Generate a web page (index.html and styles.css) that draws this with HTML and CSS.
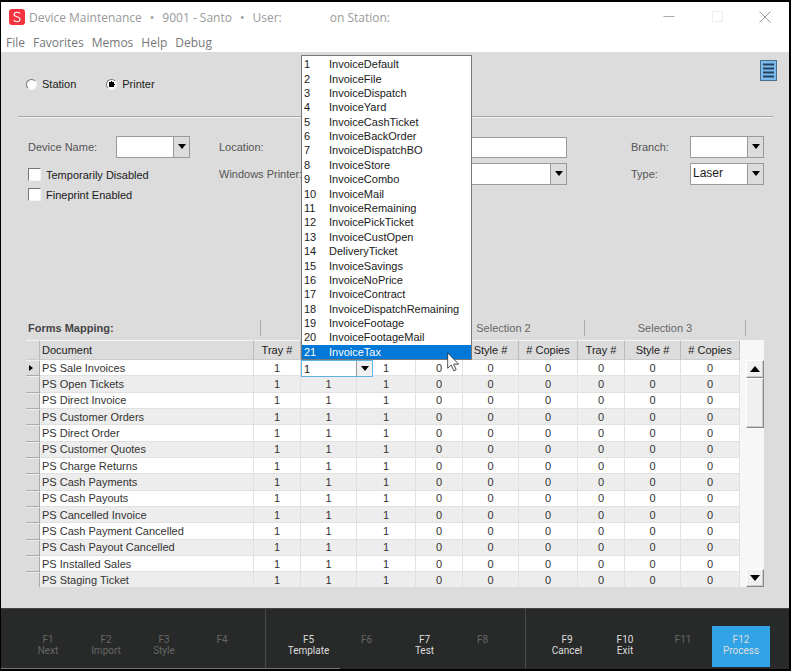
FILE: index.html
```
<!DOCTYPE html>
<html lang="en">
<head>
    <meta charset="UTF-8">
    <meta name="viewport" content="width=device-width, initial-scale=1.0">
    <title>Device Maintenance</title>
    <link rel="stylesheet" href="styles.css">
</head>
<body>
    <div class="window">
        <header class="title-bar">
            <svg class="app-logo" viewBox="0 0 16 16" aria-hidden="true">
                <rect width="16" height="16" rx="3" fill="#f5333f"/>
                <path d="M11 4.6C10.2 3.7 9.2 3.3 8 3.3C6.300 3.300 5.100 4.200 5.100 5.500C5.100 6.900 6.400 7.400 8 7.800C9.800 8.200 11 8.800 11 10.300C11 11.800 9.700 12.700 8 12.700C6.600 12.700 5.500 12.200 4.700 11.200" fill="none" stroke="#fff" stroke-width="1.1"/>
            </svg>
            <div class="title">
                <span>Device Maintenance</span>
                <span>•</span>
                <span>9001 - Santo</span>
                <span>•</span>
                <span class="user">User:</span>
                <span>on Station:</span>
            </div>
            <div class="window-buttons">
                <button type="button" aria-label="Minimize"><svg viewBox="0 0 12 12"><path d="M0.500 5.500H11.500" stroke="#aaa"/></svg></button>
                <button type="button" aria-label="Maximize" disabled><svg viewBox="0 0 12 12"><rect x="1.500" y="0.500" width="10" height="10" fill="none" stroke="#eee"/></svg></button>
                <button type="button" aria-label="Close"><svg viewBox="0 0 12 12"><path d="M0.500 0.500L11.500 11.500M11.500 0.500L0.500 11.500" stroke="#999"/></svg></button>
            </div>
        </header>

        <nav class="menu-bar">
            <a href="#">File</a>
            <a href="#">Favorites</a>
            <a href="#">Memos</a>
            <a href="#">Help</a>
            <a href="#">Debug</a>
        </nav>

        <main>
            <div class="top-row">
                <label class="radio"><input type="radio" name="device" value="station">Station</label>
                <label class="radio"><input type="radio" name="device" value="printer" checked>Printer</label>
                <button type="button" class="list-btn" aria-label="Show list">
                    <svg viewBox="0 0 17 21">
                        <rect x="0.500" y="0.500" width="16" height="20" fill="#7dbbee" stroke="#4d6f8e"/>
                        <path d="M3 4.500H14M3 8.500H14M3 12.500H14M3 16.500H14" stroke="#26435f" stroke-width="2"/>
                    </svg>
                </button>
            </div>

            <!-- Device settings -->
            <form class="settings">
                <div class="column">
                    <div class="field">
                        <label for="deviceName">Device Name:</label>
                        <span class="combo"><select id="deviceName"><option></option></select></span>
                    </div>
                    <label class="check"><input type="checkbox">Temporarily Disabled</label>
                    <label class="check"><input type="checkbox">Fineprint Enabled</label>
                </div>
                <div class="column">
                    <div class="field">
                        <label for="location">Location:</label>
                        <input type="text" id="location" class="wide">
                    </div>
                    <div class="field">
                        <label for="winPrinter">Windows Printer:</label>
                        <span class="combo wide"><select id="winPrinter"><option></option></select></span>
                    </div>
                </div>
                <div class="column">
                    <div class="field">
                        <label for="branch">Branch:</label>
                        <span class="combo"><select id="branch"><option></option></select></span>
                    </div>
                    <div class="field">
                        <label for="type">Type:</label>
                        <span class="combo"><select id="type"><option>Laser</option></select></span>
                    </div>
                </div>
            </form>

            <!-- Forms mapping -->
            <div class="group-row">
                <h2>Forms Mapping:</h2>
                <span class="group"></span>
                <span class="group">Selection 2</span>
                <span class="group last">Selection 3</span>
            </div>

            <div class="grid">
                <div class="grid-view">
                    <table>
                        <thead>
                            <tr>
                                <th class="marker"></th>
                                <th class="document">Document</th>
                                <th class="tray">Tray #</th>
                                <th class="style"></th>
                                <th class="copies"></th>
                                <th class="tray"></th>
                                <th class="style">Style #</th>
                                <th class="copies"># Copies</th>
                                <th class="tray">Tray #</th>
                                <th class="style">Style #</th>
                                <th class="copies"># Copies</th>
                            </tr>
                        </thead>
                        <tbody id="rows"></tbody>
                    </table>
                </div>
                <div class="scrollbar">
                    <button type="button" aria-label="Scroll up"><svg viewBox="0 0 10 6"><path d="M5 0L10 6H0Z"/></svg></button>
                    <div class="thumb"></div>
                    <button type="button" class="down" aria-label="Scroll down"><svg viewBox="0 0 10 6"><path d="M0 0H10L5 6Z"/></svg></button>
                </div>

                <!-- Style drop-down, open over the grid -->
                <div class="editor">
                    <span class="combo"><select aria-label="Style"><option>1</option></select></span>
                    <ul class="popup" id="styles"></ul>
                    <svg class="cursor" viewBox="0 0 13 20" aria-hidden="true">
                        <path d="M0.700 0.900V16.200L4.200 13L6.800 18.800L9.200 17.700L6.700 12.200H11.700Z" fill="#fff" stroke="#222" stroke-width="0.800"/>
                    </svg>
                </div>
            </div>
        </main>

        <footer>
            <div class="keys">
                <button type="button" disabled><span>F1</span><span>Next</span></button>
                <button type="button" disabled><span>F2</span><span>Import</span></button>
                <button type="button" disabled><span>F3</span><span>Style</span></button>
                <button type="button" disabled><span>F4</span></button>
            </div>
            <div class="keys">
                <button type="button"><span>F5</span><span>Template</span></button>
                <button type="button" disabled><span>F6</span></button>
                <button type="button"><span>F7</span><span>Test</span></button>
                <button type="button" disabled><span>F8</span></button>
            </div>
            <div class="keys">
                <button type="button"><span>F9</span><span>Cancel</span></button>
                <button type="button"><span>F10</span><span>Exit</span></button>
                <button type="button" disabled><span>F11</span></button>
                <button type="button" class="process"><span>F12</span><span>Process</span></button>
            </div>
        </footer>
    </div>

    <script>
        const documents = [
            'PS Sale Invoices', 'PS Open Tickets', 'PS Direct Invoice', 'PS Customer Orders',
            'PS Direct Order', 'PS Customer Quotes', 'PS Charge Returns', 'PS Cash Payments',
            'PS Cash Payouts', 'PS Cancelled Invoice', 'PS Cash Payment Cancelled',
            'PS Cash Payout Cancelled', 'PS Installed Sales', 'PS Staging Ticket'
        ];
        const styles = [
            'InvoiceDefault', 'InvoiceFile', 'InvoiceDispatch', 'InvoiceYard', 'InvoiceCashTicket',
            'InvoiceBackOrder', 'InvoiceDispatchBO', 'InvoiceStore', 'InvoiceCombo', 'InvoiceMail',
            'InvoiceRemaining', 'InvoicePickTicket', 'InvoiceCustOpen', 'DeliveryTicket',
            'InvoiceSavings', 'InvoiceNoPrice', 'InvoiceContract', 'InvoiceDispatchRemaining',
            'InvoiceFootage', 'InvoiceFootageMail', 'InvoiceTax'
        ];

        const rows = document.getElementById('rows');
        documents.forEach((name, i) => {
            const row = rows.insertRow();
            row.insertCell().className = 'marker' + (i === 0 ? ' current' : '');
            const cell = row.insertCell();
            cell.className = 'document';
            cell.textContent = name;
            [1, 1, 1, 0, 0, 0, 0, 0, 0].forEach((value, col) => {
                // the first row's style is shown by the editor
                row.insertCell().textContent = i === 0 && col === 1 ? '' : value;
            });
        });

        const list = document.getElementById('styles');
        styles.forEach((name, i) => {
            const item = document.createElement('li');
            item.innerHTML = '<span>' + (i + 1) + '</span>' + '<span>' + name + '</span>';
            if (i === styles.length - 1) item.className = 'selected';
            list.appendChild(item);
        });
    </script>
</body>
</html>
```
FILE: styles.css
```
* {
    margin: 0;
    padding: 0;
    box-sizing: border-box;
}

body {
    background-color: #000;
    color: #1a1a1a;
    font-family: "Liberation Sans", Arial, sans-serif;
    font-size: 11px;
}

button, input, select {
    font: inherit;
    color: inherit;
    border: none;
    border-radius: 0;
}

button {
    background: none;
}

.window {
    display: flex;
    flex-direction: column;
    min-height: 100vh;
    border: 2px solid #000;
    border-left-width: 1px;
}

/* Title and menu */
.title-bar {
    display: flex;
    align-items: center;
    height: 30px;
    padding: 0 18px 0 8px;
    background-color: #fff;
    color: #999;
    font-family: "Open Sans", "Noto Sans", sans-serif;
    font-size: 12px;
}

.app-logo {
    width: 16px;
    height: 16px;
    margin-right: 4px;
}

.title {
    display: flex;
    gap: 8px;
    flex: 1;
    white-space: nowrap;
}

.title .user {
    margin-right: 40px;
}

.window-buttons {
    display: flex;
    gap: 36px;
}

.window-buttons button {
    width: 12px;
    height: 12px;
}

.window-buttons svg {
    display: block;
}

.menu-bar {
    display: flex;
    gap: 8px;
    height: 20px;
    padding-left: 5px;
    background-color: #fff;
    font-family: "Open Sans", "Noto Sans", sans-serif;
    font-size: 12px;
    line-height: 21px;
}

.menu-bar a {
    color: #777;
    text-decoration: none;
}

/* Page */
main {
    flex: 1;
    padding: 8px 25px 20px;
    background-color: #dcdcdc;
}

.top-row {
    display: flex;
    align-items: center;
    gap: 30px;
    height: 57px;
    margin: 0 -9px 0 -8px;
    padding: 0 0 8px 8px;
    border-bottom: 1px solid #a8a8a8;
    box-shadow: 0 1px #f0f0f0;
}

.radio, .check {
    display: flex;
    align-items: center;
    gap: 5px;
}

.radio input {
    appearance: none;
    width: 11px;
    height: 11px;
    border: 1px solid;
    border-color: #777 #f4f4f4 #f4f4f4 #777;
    border-radius: 50%;
    background-color: #fff;
}

.radio input:checked {
    background-image: radial-gradient(#000 0 3px, transparent 3px);
}

.list-btn {
    align-self: flex-start;
    width: 17px;
    height: 21px;
    margin-left: auto;
    margin-right: -4px;
}

.list-btn svg {
    display: block;
}

.settings {
    display: flex;
    justify-content: space-between;
    padding: 19px 0 0 2px;
    height: 203px;
    color: #555;
}

.column {
    display: flex;
    flex-direction: column;
    gap: 5px;
}

.column:nth-child(2) {
    flex: 1;
    margin: 0 64px 0 29px;
}

.field {
    display: flex;
    align-items: center;
    height: 22px;
}

.column:first-child .field {
    margin-bottom: 4px;
}

.field label {
    width: 88px;
    white-space: nowrap;
}

.column:last-child label {
    width: 59px;
}

.check {
    height: 15px;
    color: #1a1a1a;
}

.check input {
    appearance: none;
    width: 13px;
    height: 13px;
    border: 1px solid;
    border-color: #777 #f4f4f4 #f4f4f4 #777;
    background-color: #fff;
}

.combo {
    position: relative;
    display: flex;
    width: 74px;
    height: 22px;
    border: 1px solid #999;
    background-color: #fff;
}

.combo select {
    appearance: none;
    width: 100%;
    padding: 0 18px 2px 2px;
    background: none;
    color: #1a1a1a;
    outline: none;
}

#type {
    font-size: 12px;
}

.combo::before {
    content: "";
    position: absolute;
    top: 0;
    right: 0;
    bottom: 0;
    width: 15px;
    border-left: 1px solid #999;
    background-color: #dcdcdc;
}

.combo::after {
    content: "";
    position: absolute;
    top: 7px;
    right: 3px;
    border: 4px solid transparent;
    border-top: 5px solid #000;
    border-bottom: none;
}

.wide {
    flex: 1;
}

input.wide {
    min-width: 0;
    height: 21px;
    padding: 0 2px;
    border: 1px solid #999;
    background-color: #fff;
}

/* Forms mapping */
.group-row {
    display: flex;
    align-items: center;
    height: 16px;
    margin: 0 18px 4px 2px;
    color: #666;
}

.group-row h2 {
    flex: 1;
    color: #444;
    font-size: 11px;
}

.group {
    width: 162px;
    height: 16px;
    border-left: 1px solid #aaa;
    line-height: 16px;
    text-align: center;
}

.group.last {
    border-right: 1px solid #aaa;
}

.grid {
    position: relative;
    display: flex;
    gap: 6px;
    background-color: #f7f7f7;
}

.grid-view {
    flex: 1;
    height: 247px;
    overflow: hidden;
}

table {
    width: 100%;
    height: 249px;
    table-layout: fixed;
    border-collapse: separate;
    border-spacing: 0;
}

th {
    height: 20px;
    border-top: 1px solid #f4f4f4;
    border-right: 1px solid #bbb;
    border-bottom: 1px solid #ccc;
    background-color: #dcdcdc;
    color: #222;
    font-weight: normal;
}

td {
    border-right: 1px solid #e1e1e1;
    border-bottom: 1px solid #e1e1e1;
    background-color: #fff;
    color: #333;
    line-height: 14px;
    text-align: center;
}

tr:nth-child(even) td {
    background-color: #ededed;
}

th.marker {
    width: 14px;
}

th.tray {
    width: 47px;
}

th.style {
    width: 56px;
}

th.copies {
    width: 59px;
}

th.document, td.document {
    padding-left: 2px;
    text-align: left;
}

td.marker, tr:nth-child(even) td.marker {
    border-top: 1px solid #eee;
    border-right-color: #aaa;
    border-bottom-color: #aaa;
    background-color: #dcdcdc;
}

td.current::before {
    content: "";
    display: block;
    width: 0;
    margin-left: 3px;
    border: 3px solid transparent;
    border-left: 4px solid #000;
    border-right: none;
}

.scrollbar {
    display: flex;
    flex-direction: column;
    width: 18px;
    padding-top: 20px;
}

.scrollbar button, .thumb {
    height: 18px;
    border: 1px solid;
    border-color: #fff #888 #888 #fff;
    background-color: #f0f0f0;
    box-shadow: inset -1px -1px #ccc;
}

.scrollbar svg {
    display: block;
    width: 10px;
    height: 6px;
    margin: 0 auto;
}

.scrollbar .thumb {
    height: 50px;
}

.scrollbar .down {
    margin-top: auto;
}

.editor {
    position: absolute;
    top: 20px;
    right: 391px;
}

.editor .combo {
    width: 72px;
    height: 17px;
    border-color: #5fb2e6;
}

.editor .combo select {
    padding-bottom: 0;
}

.editor .combo::before {
    background-color: #f0f0f0;
}

.editor .combo::after {
    top: 5px;
}

.popup {
    position: absolute;
    left: 0;
    bottom: 17px;
    display: grid;
    grid-auto-rows: 1fr;
    width: 171px;
    height: 305px;
    padding-top: 1px;
    border: 1px solid #777;
    background-color: #fff;
    list-style: none;
}

.popup li {
    display: flex;
    align-items: center;
    padding-left: 2px;
}

.popup li span:first-child {
    width: 25px;
}

.popup .selected {
    background-color: #0078d7;
    color: #fff;
}

.cursor {
    position: absolute;
    top: -8px;
    left: 146px;
    width: 13px;
    height: 20px;
}

/* Function keys */
footer {
    position: relative;
    display: grid;
    grid-template-columns: 1fr 260px 1fr;
    height: 61px;
    border-top: 1px solid #444;
    background-color: #282a29;
    font-family: Roboto, sans-serif;
    font-size: 10px;
}

/* progress line under the keys */
footer::after {
    content: "";
    position: absolute;
    left: 0;
    bottom: 0;
    width: 43%;
    height: 1px;
    background-color: #777;
}

.keys {
    display: flex;
    align-items: flex-end;
    justify-content: center;
    padding-bottom: 2px;
}

.keys:first-child {
    justify-content: flex-end;
    padding-right: 14px;
}

.keys:last-child {
    justify-content: flex-start;
    padding-left: 12px;
}

.keys + .keys {
    border-left: 1px solid #484a49;
}

.keys button {
    display: flex;
    flex-direction: column;
    align-items: center;
    width: 58px;
    height: 41px;
    padding-top: 8px;
    color: #ddd;
    line-height: 11px;
}

.keys button:disabled {
    color: #666;
}

.keys .process {
    background-color: #31a3e6;
}
```
